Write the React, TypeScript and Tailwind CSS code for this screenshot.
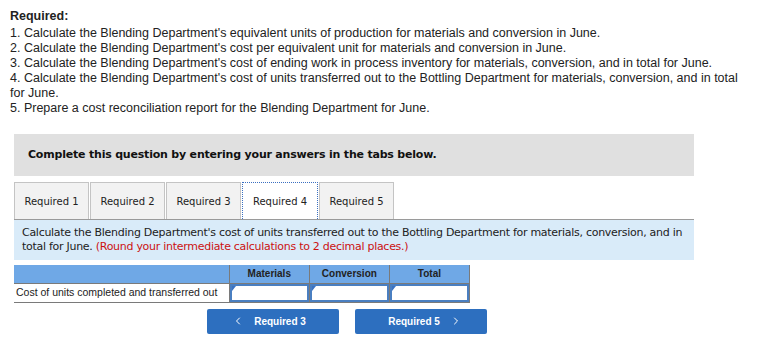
import { ChevronLeft, ChevronRight } from "lucide-react"

const lines = [
  "1. Calculate the Blending Department's equivalent units of production for materials and conversion in June.",
  "2. Calculate the Blending Department's cost per equivalent unit for materials and conversion in June.",
  "3. Calculate the Blending Department's cost of ending work in process inventory for materials, conversion, and in total for June.",
  "4. Calculate the Blending Department's cost of units transferred out to the Bottling Department for materials, conversion, and in total for June.",
  "5. Prepare a cost reconciliation report for the Blending Department for June.",
]

const tabs = ["Required 1", "Required 2", "Required 3", "Required 4", "Required 5"]

function AnswerCell() {
  return (
    <td className="border border-[#7a7a7a] p-0 h-[18px]">
      <div className="relative h-[18px] border-2 border-[#4a7fc1] bg-white">
        <span className="absolute left-0 top-0 w-0 h-0 border-t-[5px] border-r-[4px] border-t-[#3a73c4] border-r-transparent" />
      </div>
    </td>
  )
}

export default function App() {
  return (
    <div className="w-[770px] h-[352px] bg-white overflow-hidden">
      <div className="pl-[10px] pt-[9px] pr-[24px] text-[12.5px] leading-[15px] text-[#222] font-['Liberation_Sans',sans-serif]">
        <div className="font-bold mb-[2px]">Required:</div>
        {lines.map((l) => (
          <div key={l}>{l}</div>
        ))}
      </div>

      <div className="mx-[14px] mt-[18px] w-[680px]">
        <div className="h-[42px] bg-[#e0e0e0] flex items-center pl-[14px] font-['DejaVu_Sans',Verdana,sans-serif] text-[11px] font-bold text-[#111] tracking-[-0.2px]">
          Complete this question by entering your answers in the tabs below.
        </div>

        <div className="flex mt-[6px] h-[37px] font-['DejaVu_Sans',Verdana,sans-serif] text-[10px] text-[#222]">
          {tabs.map((t, i) =>
            i === 3 ? (
              <div
                key={t}
                className="w-[76px] bg-white border border-dotted border-[#3a6fc0] border-b-0 flex items-center justify-center mr-px"
              >
                {t}
              </div>
            ) : (
              <div
                key={t}
                className="w-[75px] bg-[#f2f2f2] border border-[#c4c4c4] border-b-0 flex items-center justify-center mr-px"
              >
                {t}
              </div>
            )
          )}
        </div>

        <div className="h-[41px] bg-[#d9ebf9] border-t border-[#9a9a9a] px-[8px] pt-[6px] font-['DejaVu_Sans',Verdana,sans-serif] text-[11px] leading-[14px] text-[#222] tracking-[-0.28px]">
          Calculate the Blending Department's cost of units transferred out to the Bottling Department for materials, conversion, and in
          total for June. <span className="text-[#cc1111]">(Round your intermediate calculations to 2 decimal places.)</span>
        </div>

        <table className="mt-[5px] w-[456px] border-collapse font-['Liberation_Sans',Arial,sans-serif] text-[10.5px] text-[#222]">
          <thead>
            <tr className="bg-[#6fa8e6] h-[18px]">
              <th className="w-[215px] border-b border-[#7a7a7a]"></th>
              <th className="w-[80px] border border-[#7a7a7a] border-t-0 font-bold text-[10px]">Materials</th>
              <th className="w-[80px] border border-[#7a7a7a] border-t-0 font-bold text-[10px]">Conversion</th>
              <th className="w-[80px] border border-[#7a7a7a] border-t-0 font-bold text-[10px]">Total</th>
            </tr>
          </thead>
          <tbody>
            <tr>
              <td className="border-b border-[#7a7a7a] pl-[2px] text-left whitespace-nowrap">
                Cost of units completed and transferred out
              </td>
              <AnswerCell />
              <AnswerCell />
              <AnswerCell />
            </tr>
          </tbody>
        </table>

        <div className="flex gap-[16px] mt-[6px] ml-[193px] font-['Liberation_Sans',Arial,sans-serif] text-[10px] font-bold text-white">
          <button className="w-[132px] h-[25px] bg-[#2d6fbf] rounded-[2px] flex items-center justify-center gap-[10px]">
            <ChevronLeft size={12} strokeWidth={2} />
            <span className="mr-[8px]">Required 3</span>
          </button>
          <button className="w-[132px] h-[25px] bg-[#2d6fbf] rounded-[2px] flex items-center justify-center gap-[10px]">
            <span className="ml-[8px]">Required 5</span>
            <ChevronRight size={12} strokeWidth={2} />
          </button>
        </div>
      </div>
    </div>
  )
}
